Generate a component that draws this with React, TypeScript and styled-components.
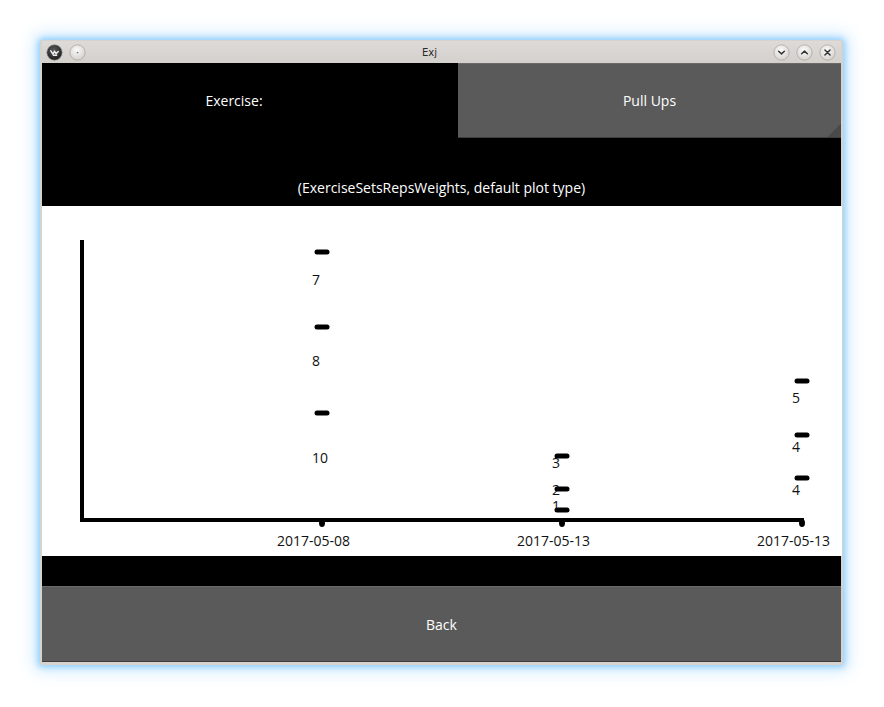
import React from "react";
import styled, { createGlobalStyle } from "styled-components";

const Global = createGlobalStyle`
  html, body { margin: 0; padding: 0; background: #ffffff; }
  body { font-family: "Open Sans", "DejaVu Sans", sans-serif; }
`;

const Page = styled.div`
  width: 884px;
  height: 707px;
  padding: 40px 0 0 40px;
  box-sizing: border-box;
  background: #ffffff;
`;

const Window = styled.div`
  width: 803px;
  height: 625px;
  display: flex;
  flex-direction: column;
  background: #d6d2ce;
  border-radius: 3px 3px 2px 2px;
  box-shadow: 0 0 6px 2px rgba(120, 195, 250, 0.75), 0 0 16px 6px rgba(150, 210, 255, 0.45);
  padding: 1px 2px 3px 2px;
  box-sizing: border-box;
`;

const TitleBar = styled.div`
  height: 22px;
  display: flex;
  align-items: center;
  padding: 0 5px 0 4px;
  background: linear-gradient(#dedad7, #d4d0cc);
`;

const Title = styled.div`
  flex: 1;
  text-align: center;
  font-family: "DejaVu Sans", sans-serif;
  font-size: 10px;
  color: #2a2a2a;
`;

const IconGroup = styled.div`
  display: flex;
  gap: 6px;
  align-items: center;
`;

const Content = styled.div`
  flex: 1;
  display: flex;
  flex-direction: column;
  background: #000000;
`;

const TopRow = styled.div`
  height: 75px;
  display: flex;
`;

const Label = styled.div`
  width: 416px;
  padding-right: 32px;
  box-sizing: border-box;
  display: flex;
  align-items: center;
  justify-content: center;
  color: #ffffff;
  font-size: 14px;
`;

const Button = styled.div<{ $grip?: boolean }>`
  flex: 1;
  position: relative;
  display: flex;
  align-items: center;
  justify-content: center;
  background: #5a5a5a;
  color: #ffffff;
  font-size: 14px;
  box-sizing: border-box;
  border-top: 1px solid #6a6a6a;
  border-bottom: 1px solid #3e3e3e;
  ${(p) =>
    p.$grip
      ? `&::after {
    content: "";
    position: absolute;
    right: 0;
    bottom: 0;
    width: 14px;
    height: 14px;
    background: linear-gradient(135deg, transparent 50%, #4a4a4a 50%);
  }`
      : ""}
`;

const Subtitle = styled.div`
  height: 68px;
  display: flex;
  align-items: flex-end;
  justify-content: center;
  padding-bottom: 9px;
  box-sizing: border-box;
  color: #ffffff;
  font-size: 14px;
`;

const PlotArea = styled.div`
  height: 350px;
  background: #ffffff;
  margin-right: -1px;
`;

const Spacer = styled.div`
  height: 30px;
`;

const BottomRow = styled.div`
  height: 76px;
  display: flex;
`;

const TitleIcons = () => (
  <IconGroup>
    <svg width="17" height="17" viewBox="0 0 16 16">
      <defs>
        <radialGradient id="dk" cx="0.45" cy="0.35" r="0.7">
          <stop offset="0" stopColor="#5a5a5a" />
          <stop offset="1" stopColor="#1a1a1a" />
        </radialGradient>
      </defs>
      <circle cx="8" cy="8" r="7.2" fill="url(#dk)" stroke="#888" strokeWidth="0.6" />
      <path d="M4.5 6.5 L6.5 9.5 L8 7 L9.5 9 L11.5 7 M7 10.5 L10 10.5" stroke="#eee" strokeWidth="1.4" fill="none" strokeLinecap="round" />
    </svg>
    <svg width="17" height="17" viewBox="0 0 16 16">
      <defs>
        <radialGradient id="lt" cx="0.45" cy="0.35" r="0.7">
          <stop offset="0" stopColor="#fbfbfb" />
          <stop offset="1" stopColor="#d0cdca" />
        </radialGradient>
      </defs>
      <circle cx="8" cy="8" r="7.2" fill="url(#lt)" stroke="#a8a4a0" strokeWidth="0.7" />
      <circle cx="8" cy="8" r="0.8" fill="#777" />
    </svg>
  </IconGroup>
);

const WinButton = ({ kind }: { kind: "min" | "max" | "close" }) => (
  <svg width="17" height="17" viewBox="0 0 16 16">
    <defs>
      <radialGradient id={`wb-${kind}`} cx="0.45" cy="0.35" r="0.7">
        <stop offset="0" stopColor="#fbfbfb" />
        <stop offset="1" stopColor="#d3d0cd" />
      </radialGradient>
    </defs>
    <circle cx="8" cy="8" r="7.2" fill={`url(#wb-${kind})`} stroke="#a8a4a0" strokeWidth="0.7" />
    {kind === "min" && <path d="M5.3 6.8 L8 9.3 L10.7 6.8" stroke="#333" strokeWidth="1.4" fill="none" strokeLinecap="round" strokeLinejoin="round" />}
    {kind === "max" && <path d="M5.3 9.2 L8 6.7 L10.7 9.2" stroke="#333" strokeWidth="1.4" fill="none" strokeLinecap="round" strokeLinejoin="round" />}
    {kind === "close" && <path d="M5.6 5.6 L10.4 10.4 M10.4 5.6 L5.6 10.4" stroke="#333" strokeWidth="1.4" fill="none" strokeLinecap="round" />}
  </svg>
);

type Pt = { y: number; label: string; ly: number };
type Col = { x: number; date: string; pts: Pt[] };

const cols: Col[] = [
  {
    x: 280,
    date: "2017-05-08",
    pts: [
      { y: 46, label: "7", ly: 79 },
      { y: 121, label: "8", ly: 160 },
      { y: 207, label: "10", ly: 257 },
    ],
  },
  {
    x: 520,
    date: "2017-05-13",
    pts: [
      { y: 250, label: "3", ly: 262 },
      { y: 283, label: "2", ly: 289 },
      { y: 304, label: "1", ly: 305 },
    ],
  },
  {
    x: 760,
    date: "2017-05-13",
    pts: [
      { y: 175, label: "5", ly: 197 },
      { y: 229, label: "4", ly: 246 },
      { y: 272, label: "4", ly: 289 },
    ],
  },
];

const Plot = () => (
  <svg width="800" height="350" viewBox="0 0 800 350">
    <line x1="40" y1="34" x2="40" y2="316" stroke="#000" strokeWidth="4" />
    <line x1="38" y1="314" x2="762" y2="314" stroke="#000" strokeWidth="4" />
    {cols.map((c, i) => (
      <g key={i}>
        <ellipse cx={c.x} cy={317} rx="3" ry="4" fill="#000" />
        {c.pts.map((p, j) => (
          <g key={j}>
            <line x1={c.x - 5} y1={p.y} x2={c.x + 5} y2={p.y} stroke="#000" strokeWidth="5" strokeLinecap="round" />
            <text x={c.x - 10} y={p.ly} fontFamily="'Open Sans', sans-serif" fontSize="14" fill="#111">
              {p.label}
            </text>
          </g>
        ))}
        <text x={c.x - 45} y={340} fontFamily="'Open Sans', sans-serif" fontSize="14" fill="#111">
          {c.date}
        </text>
      </g>
    ))}
  </svg>
);

export default function App() {
  return (
    <Page>
      <Global />
      <Window>
        <TitleBar>
          <TitleIcons />
          <Title>Exj</Title>
          <IconGroup>
            <WinButton kind="min" />
            <WinButton kind="max" />
            <WinButton kind="close" />
          </IconGroup>
        </TitleBar>
        <Content>
          <TopRow>
            <Label>Exercise:</Label>
            <Button $grip>Pull Ups</Button>
          </TopRow>
          <Subtitle>(ExerciseSetsRepsWeights, default plot type)</Subtitle>
          <PlotArea>
            <Plot />
          </PlotArea>
          <Spacer />
          <BottomRow>
            <Button>Back</Button>
          </BottomRow>
        </Content>
      </Window>
    </Page>
  );
}
